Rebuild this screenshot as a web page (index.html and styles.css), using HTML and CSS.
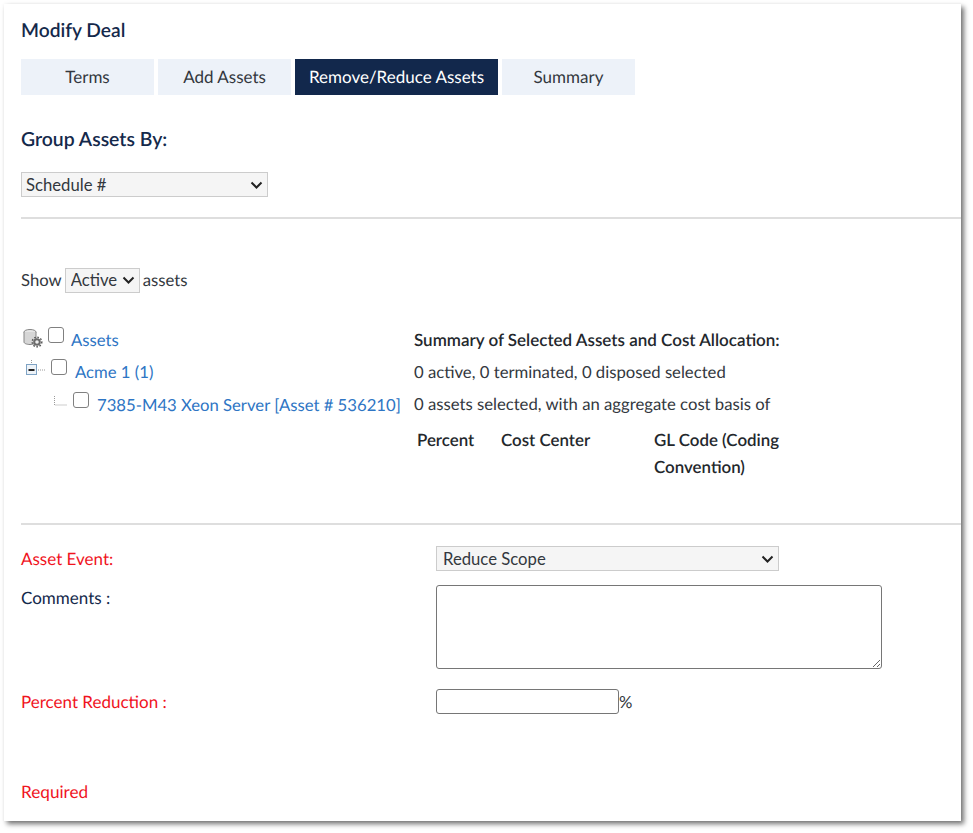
FILE: index.html
```html
<!DOCTYPE html>
<html lang="en">
<head>
<meta charset="utf-8">
<title>Modify Deal</title>
<link rel="stylesheet" href="styles.css">
</head>
<body>
<main class="card">
  <h1 class="title">Modify Deal</h1>
  <nav class="tabs">
    <a class="tab">Terms</a>
    <a class="tab">Add Assets</a>
    <a class="tab tab-active">Remove/Reduce Assets</a>
    <a class="tab">Summary</a>
  </nav>
  <h2 class="group-title">Group Assets By:</h2>
  <select class="group-select"><option>Schedule #</option></select>
  <hr class="rule rule-first">
  <div class="show-row">Show <select class="show-select"><option>Active</option></select> assets</div>
  <section class="assets">
    <div class="tree">
      <div class="node node-root">
        <svg class="icon-db" width="20" height="20" viewBox="0 0 20 20">
          <ellipse cx="7" cy="4" rx="6" ry="2.500" fill="#e6e6e6" stroke="#858585"/>
          <path d="M1 4v10c0 1.400 2.700 2.500 6 2.500s6-1.100 6-2.500V4" fill="#d6d6d6" stroke="#858585"/>
          <circle cx="14" cy="14" r="3.800" fill="#6a6a6a"/>
          <circle cx="14" cy="14" r="4.800" fill="none" stroke="#555" stroke-width="1.400" stroke-dasharray="1.600 1.600"/>
          <circle cx="14" cy="14" r="1.800" fill="#eee"/>
        </svg>
        <input type="checkbox" class="check">
        <a class="link">Assets</a>
      </div>
      <div class="node node-acme">
        <svg class="icon-minus" width="24" height="18" viewBox="0 0 24 18">
          <path d="M6.500 0v4M13 10h7" stroke="#9a9a9a" stroke-dasharray="1 1" fill="none"/>
          <rect x="1.500" y="4.500" width="10" height="10" fill="#eef3f8" stroke="#7fa3c4"/>
          <rect x="3.500" y="9" width="6" height="2" fill="#222"/>
        </svg>
        <input type="checkbox" class="check">
        <a class="link">Acme 1 (1)</a>
      </div>
      <div class="node node-server">
        <svg class="icon-line" width="16" height="14" viewBox="0 0 16 14">
          <path d="M1.500 1v9h13" stroke="#9a9a9a" stroke-dasharray="1 1" fill="none"/>
        </svg>
        <input type="checkbox" class="check">
        <a class="link">7385-M43 Xeon Server [Asset # 536210]</a>
      </div>
    </div>
    <div class="summary">
      <div class="summary-title">Summary of Selected Assets and Cost Allocation:</div>
      <div class="summary-line">0 active, 0 terminated, 0 disposed selected</div>
      <div class="summary-line">0 assets selected, with an aggregate cost basis of</div>
      <div class="alloc">
        <div>Percent</div>
        <div>Cost Center</div>
        <div>GL Code (Coding Convention)</div>
      </div>
    </div>
  </section>
  <hr class="rule rule-second">
  <form class="event-form">
    <label class="label required label-event">Asset Event:</label>
    <select class="event-select"><option>Reduce Scope</option></select>
    <label class="label label-comments">Comments :</label>
    <textarea class="comments"></textarea>
    <label class="label required label-percent">Percent Reduction :</label>
    <div class="percent"><input type="text" class="percent-input">%</div>
  </form>
  <div class="required required-note">Required</div>
</main>
</body>
</html>
```
FILE: styles.css
```css
* { box-sizing: border-box; }
html, body { margin: 0; background: #fff; }
body {
  width: 973px;
  height: 833px;
  overflow: hidden;
  font-family: Lato, "Liberation Sans", sans-serif;
  font-size: 16.7px;
  color: #33383e;
  text-rendering: geometricPrecision;
}
.card {
  width: 957px;
  height: 817px;
  margin: 4px 0 0 4px;
  padding: 16px 0 0 17px;
  background: #fff;
  box-shadow: 3px 3px 5px rgba(0, 0, 0, .55), 0 0 3px rgba(0, 0, 0, .04);
}
.title {
  margin: 0;
  padding-top: 1px;
  height: 20px;
  font-size: 19.2px;
  line-height: 20px;
  font-weight: 600;
  color: #14294b;
}
.tabs { display: flex; gap: 4px; margin-top: 19px; }
.tab {
  width: 133px;
  height: 36px;
  padding-bottom: 1px;
  display: flex;
  align-items: center;
  justify-content: center;
  background: #edf2f9;
  color: #33383e;
  font-size: 17px;
}
.tab-active { width: 203px; background: #12284c; color: #fff; }
.group-title {
  margin: 33px 0 0;
  padding-top: 1px;
  height: 22px;
  font-size: 19.4px;
  line-height: 22px;
  font-weight: 600;
  color: #14294b;
}
select {
  appearance: none;
  font: inherit;
  color: #33383e;
  padding: 0 20px 0 5px;
  background-color: #f5f5f5;
  background-image: url("data:image/svg+xml,%3Csvg xmlns='http://www.w3.org/2000/svg' width='13' height='8' viewBox='0 0 13 8'%3E%3Cpath d='M1.500 1.500l5 5 5-5' fill='none' stroke='%23222' stroke-width='2'/%3E%3C/svg%3E");
  background-repeat: no-repeat;
  background-position: right 4px center;
  border: 1px solid #ccc;
  border-radius: 0;
}
.group-select {
  display: block;
  width: 247px;
  height: 25px;
  margin-top: 22px;
  padding-left: 4px;
}
.rule {
  height: 2px;
  margin: 0;
  border: 0;
  background: #dedede;
}
.rule-first { margin-top: 20px; }
.show-row {
  display: flex;
  align-items: center;
  gap: 3px;
  margin-top: 48px;
  height: 26px;
}
.show-select { width: 75px; height: 25px; }
.assets {
  display: grid;
  grid-template-columns: 393px 1fr;
  margin-top: 33px;
  height: 197px;
}
.node { display: flex; align-items: center; }
.check {
  width: 16px;
  height: 16px;
  margin: 0 0 10px;
  appearance: none;
  background: #fff;
  border: 1px solid #808080;
  border-radius: 3px;
  flex: none;
}
.link { color: #2e75c4; }
.node-root { height: 28px; padding-left: 2px; }
.icon-db { margin: 0 5px 4px 0; }
.node-root .link { margin-left: 7px; }
.node-acme { height: 28px; margin-top: 4px; padding-left: 4px; }
.icon-minus { margin: 0 2px 6px 0; }
.node-acme .link { margin-left: 8px; }
.node-server { height: 28px; margin-top: 5px; padding-left: 32px; }
.icon-line { margin: 0 4px 6px 0; }
.node-server .link { margin-left: 8px; white-space: nowrap; }
.summary-title { font-size: 17px; font-weight: 600; color: #23272c; line-height: 28px; }
.summary-line { line-height: 28px; margin-top: 4px; }
.alloc {
  display: grid;
  grid-template-columns: 84px 153px 135px;
  margin: 8px 0 0 3px;
  line-height: 27px;
  font-size: 16.9px;
  font-weight: 600;
  color: #23272c;
}
.event-form {
  display: grid;
  grid-template-columns: 415px 1fr;
  align-items: start;
  margin-top: 21px;
}
.label { line-height: 24px; font-size: 17px; color: #14294b; }
.label.required { color: #f0141e; }
.label-event { margin-top: 1px; }
.required { color: #f0141e; }
.event-select { width: 343px; height: 25px; padding-left: 6px; }
.label-comments { margin-top: 15px; }
.comments {
  display: block;
  width: 446px;
  height: 84px;
  margin: 14px 0 0;
  border: 1px solid #767676;
  border-radius: 3px;
  background: #fff;
}
.label-percent { margin-top: 21px; }
.percent { display: flex; align-items: center; margin-top: 20px; }
.percent-input {
  width: 183px;
  height: 25px;
  margin: 0;
  border: 1px solid #767676;
  border-radius: 3px;
  background: #fff;
}
.required-note { margin-top: 66px; line-height: 24px; font-size: 17.2px; }
```
